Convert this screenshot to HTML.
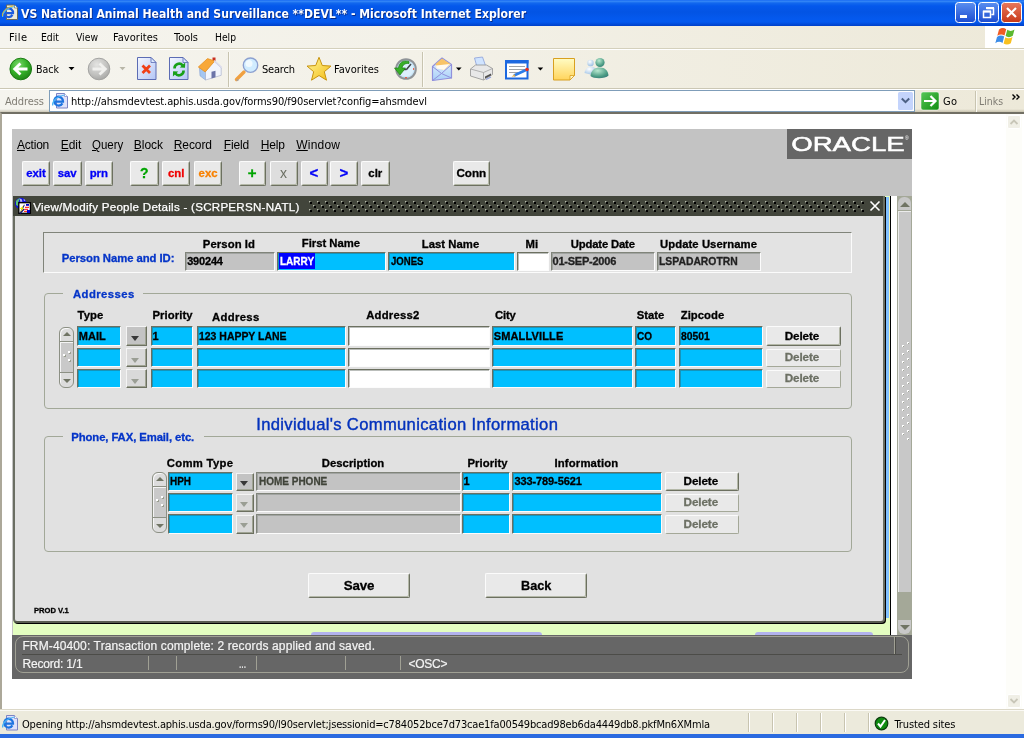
<!DOCTYPE html>
<html><head><meta charset="utf-8"><title>VS National Animal Health and Surveillance **DEVL** - Microsoft Internet Explorer</title>
<style>
*{box-sizing:border-box;margin:0;padding:0}
html,body{width:1024px;height:738px;overflow:hidden;background:#fff;font-family:"Liberation Sans",sans-serif}
.a{position:absolute}
.t{position:absolute;white-space:nowrap;line-height:1}
.fld{position:absolute;border:1px solid;border-color:#6c7060 #fcfcfc #fcfcfc #6c7060;box-shadow:inset 1px 1px 0 rgba(60,70,60,.35)}
.cy{background:#00bfff}
.gr{background:#c3c3c3;border-color:#80847a #fcfcfc #fcfcfc #80847a;box-shadow:inset 1px 1px 0 rgba(60,70,60,.25)}
.wh{background:#fff}
.btn{position:absolute;background:#e9e9e9;border:1px solid;border-color:#fbfbfb #6c7060 #6c7060 #fbfbfb;box-shadow:inset -1px -1px 0 #b4b8a8;border-radius:2px}
.grp{position:absolute;border:1px solid #a2a898;border-radius:4px}
.gap{position:absolute;background:#e1e1e1;height:3px}
.dd{position:absolute;background:#c3c3c3;border:1px solid;border-color:#f4f4f4 #6c7060 #6c7060 #f4f4f4;box-shadow:inset -1px -1px 0 #a0a494}
.dd:after{content:"";position:absolute;left:4px;top:9px;border:4.5px solid transparent;border-top:5px solid #383838;border-bottom:0}
.dd.sm:after{left:3px;top:7px}
.dd.off{background:#d9d9d9}
.dd.off:after{border-top-color:#9a9e94}
.scr{position:absolute;width:15px;background:#dcdcdc;border:1px solid #8c9084;border-radius:6px;box-shadow:inset 1px 1px 0 #f8f8f8}
</style></head><body><div id="root" style="position:absolute;left:0;top:0;width:1024px;height:738px;will-change:transform">
<div class="a" style="left:0;top:0;width:1024px;height:26px;background:linear-gradient(#0a5cf0 0,#3a8cf8 1px,#1268ee 3px,#0458ec 6px,#0354e4 12px,#0459ee 19px,#0459ee 22px,#0040c8 26px)"></div>
<div class="t" style="left:21.00px;top:7.30px;font-size:13px;font-family:'DejaVu Sans Condensed','Liberation Sans',sans-serif;font-weight:bold;color:#fff;letter-spacing:0.000px;text-shadow:1px 1px 0 #0a2a80;transform:scaleX(0.9295);transform-origin:0 0;">VS National Animal Health and Surveillance **DEVL** - Microsoft Internet Explorer</div>
<div class="a" style="left:0;top:26px;width:1024px;height:23px;background:linear-gradient(to right,#f5f4ee 0,#f3f1e8 40%,#ede9d9 100%);border-bottom:1px solid #d4d0bc"></div>
<div class="a" style="left:985px;top:26px;width:39px;height:22px;background:#fff"></div>
<div class="t" style="left:9.00px;top:32.30px;font-size:11px;font-family:'DejaVu Sans Condensed','Liberation Sans',sans-serif;color:#000;letter-spacing:0.505px;">File</div>
<div class="t" style="left:41.00px;top:32.30px;font-size:11px;font-family:'DejaVu Sans Condensed','Liberation Sans',sans-serif;color:#000;letter-spacing:0.000px;transform:scaleX(0.9393);transform-origin:0 0;">Edit</div>
<div class="t" style="left:76.00px;top:32.30px;font-size:11px;font-family:'DejaVu Sans Condensed','Liberation Sans',sans-serif;color:#000;letter-spacing:0.000px;transform:scaleX(0.9378);transform-origin:0 0;">View</div>
<div class="t" style="left:113.00px;top:32.30px;font-size:11px;font-family:'DejaVu Sans Condensed','Liberation Sans',sans-serif;color:#000;letter-spacing:0.050px;">Favorites</div>
<div class="t" style="left:174.00px;top:32.30px;font-size:11px;font-family:'DejaVu Sans Condensed','Liberation Sans',sans-serif;color:#000;letter-spacing:-0.046px;">Tools</div>
<div class="t" style="left:215.00px;top:32.30px;font-size:11px;font-family:'DejaVu Sans Condensed','Liberation Sans',sans-serif;color:#000;letter-spacing:0.000px;transform:scaleX(0.9305);transform-origin:0 0;">Help</div>
<div class="a" style="left:0;top:49px;width:1024px;height:40px;background:linear-gradient(to right,#f5f4ee 0,#f3f1e8 40%,#ede9d9 100%);border-top:1px solid #fff;border-bottom:1px solid #cbc7b4"></div>
<div class="t" style="left:36.00px;top:64.30px;font-size:11px;font-family:'DejaVu Sans Condensed','Liberation Sans',sans-serif;color:#000;letter-spacing:0.000px;transform:scaleX(0.9573);transform-origin:0 0;">Back</div>
<div class="t" style="left:262.00px;top:64.30px;font-size:11px;font-family:'DejaVu Sans Condensed','Liberation Sans',sans-serif;color:#000;letter-spacing:-0.195px;">Search</div>
<div class="t" style="left:334.00px;top:64.30px;font-size:11px;font-family:'DejaVu Sans Condensed','Liberation Sans',sans-serif;color:#000;letter-spacing:0.050px;">Favorites</div>
<div class="a" style="left:0;top:89px;width:1024px;height:24px;background:linear-gradient(to right,#f5f4ee 0,#f3f1e8 40%,#ede9d9 100%);border-top:1px solid #fff"></div>
<div class="a" style="left:0;top:109px;width:1024px;height:3px;background:linear-gradient(rgba(180,174,150,0),rgba(170,164,140,.55))"></div>
<div class="t" style="left:5.00px;top:96.30px;font-size:11px;font-family:'DejaVu Sans Condensed','Liberation Sans',sans-serif;color:#7f7c73;letter-spacing:-0.061px;">Address</div>
<div class="a" style="left:49px;top:90px;width:866px;height:22px;background:#fff;border:1px solid #7f9db9"></div>
<div class="t" style="left:71.00px;top:96.30px;font-size:11px;font-family:'DejaVu Sans Condensed','Liberation Sans',sans-serif;color:#000;letter-spacing:-0.089px;">http://ahsmdevtest.aphis.usda.gov/forms90/f90servlet?config=ahsmdevl</div>
<div class="t" style="left:943.00px;top:96.30px;font-size:11px;font-family:'DejaVu Sans Condensed','Liberation Sans',sans-serif;color:#000;letter-spacing:0.277px;">Go</div>
<div class="t" style="left:979.00px;top:96.30px;font-size:11px;font-family:'DejaVu Sans Condensed','Liberation Sans',sans-serif;color:#7f7c73;letter-spacing:0.000px;transform:scaleX(0.9441);transform-origin:0 0;">Links</div>
<svg class="a" style="left:0;top:0" width="1024" height="114" viewBox="0 0 1024 114">
<defs>
<radialGradient id="gB" cx="0.4" cy="0.3" r="0.8"><stop offset="0" stop-color="#7ad86a"/><stop offset="0.5" stop-color="#34b028"/><stop offset="1" stop-color="#1c7c14"/></radialGradient>
<radialGradient id="gF" cx="0.4" cy="0.3" r="0.8"><stop offset="0" stop-color="#e4e4e2"/><stop offset="0.6" stop-color="#c0c0be"/><stop offset="1" stop-color="#a0a09e"/></radialGradient>
<linearGradient id="gP" x1="0" y1="0" x2="1" y2="1"><stop offset="0" stop-color="#f4f7ff"/><stop offset="1" stop-color="#b4c6f6"/></linearGradient>
<linearGradient id="gN" x1="0" y1="0" x2="0" y2="1"><stop offset="0" stop-color="#fffcc4"/><stop offset="1" stop-color="#ffd45c"/></linearGradient>
<linearGradient id="gS" x1="0" y1="0" x2="1" y2="1"><stop offset="0" stop-color="#fff8a0"/><stop offset="1" stop-color="#f4bc10"/></linearGradient>
<linearGradient id="gM" x1="0" y1="0" x2="0" y2="1"><stop offset="0" stop-color="#e8f4ff"/><stop offset="1" stop-color="#a8d0f8"/></linearGradient>
<linearGradient id="gW" x1="0" y1="0" x2="0" y2="1"><stop offset="0" stop-color="#5a8ff0"/><stop offset="1" stop-color="#1c4cd0"/></linearGradient>
<linearGradient id="gX" x1="0" y1="0" x2="0" y2="1"><stop offset="0" stop-color="#e8785c"/><stop offset="1" stop-color="#c83818"/></linearGradient>
<linearGradient id="gG" x1="0" y1="0" x2="1" y2="1"><stop offset="0" stop-color="#58c858"/><stop offset="1" stop-color="#108c10"/></linearGradient>
<radialGradient id="gT" cx="0.4" cy="0.3" r="0.9"><stop offset="0" stop-color="#b8e8d0"/><stop offset="0.6" stop-color="#4c9c84"/><stop offset="1" stop-color="#2c6c74"/></radialGradient>
<radialGradient id="gU" cx="0.4" cy="0.3" r="0.9"><stop offset="0" stop-color="#ffffff"/><stop offset="0.7" stop-color="#a8c8e8"/><stop offset="1" stop-color="#6c94c8"/></radialGradient>
</defs>
<!-- title icon -->
<path d="M6.5 5.0h8l3 3v11.500h-11z" fill="#ecebdc" stroke="#6c6a58" stroke-width="1"/><path d="M14.5 5.0v3h3" fill="#fff" stroke="#6c6a58" stroke-width="0.700"/><path d="M12.42 14.89A4.4 4.4 0 1 1 13.00 13.1 H4.60" fill="none" stroke="#1c5ce0" stroke-width="2.300"/><path d="M2.6 17.0C2 12.5 7 7.5 14.5 6.5" fill="none" stroke="#4cb4f4" stroke-width="1.200"/>
<path d="M2.500 16C1.800 12 6 7 13 6.200" fill="none" stroke="#e8c020" stroke-width="0.900"/>
<!-- window buttons -->
<rect x="955.500" y="2.500" width="20" height="20" rx="3" fill="url(#gW)" stroke="#fff"/>
<rect x="960" y="15" width="7" height="3" fill="#fff"/>
<rect x="978.500" y="2.500" width="20" height="20" rx="3" fill="url(#gW)" stroke="#fff"/>
<path d="M986.500 8.500h7v6h-2M983.500 11.500h7v6h-7z" fill="none" stroke="#fff" stroke-width="1.500"/>
<path d="M986 8h8M983 11.500h8" stroke="#fff" stroke-width="2"/>
<rect x="1001.500" y="2.500" width="20" height="20" rx="3" fill="url(#gX)" stroke="#fff"/>
<path d="M1007 8l9 9M1016 8l-9 9" stroke="#fff" stroke-width="2.200"/>
<!-- windows flag -->
<g transform="translate(1,-0.5)">
<path d="M998 30c2.500-1.800 5-1.800 7.200-.3l-1.700 6.300c-2.200-1.500-4.700-1.500-7.200.3z" fill="#f05c24"/>
<path d="M1006.300 30.300c2.200 1.500 4.700 1.500 7.200-.3l-1.700 6.300c-2.500 1.800-5 1.800-7.200.3z" fill="#5cb830"/>
<path d="M996 37.400c2.500-1.800 5-1.800 7.200-.3l-1.700 6.300c-2.200-1.500-4.700-1.500-7.200.3z" fill="#3c8ce8"/>
<path d="M1004.300 37.700c2.200 1.500 4.700 1.500 7.200-.3l-1.700 6.300c-2.500 1.800-5 1.800-7.200.3z" fill="#f8c020"/>
</g>
<!-- back -->
<circle cx="20.750" cy="69" r="10.800" fill="url(#gB)" stroke="#1c7c14" stroke-width="1"/>
<path d="M27.500 69h-12M20.500 63.500l-5.800 5.500l5.800 5.500" fill="none" stroke="#fff" stroke-width="2.800" stroke-linejoin="miter"/>
<path d="M68.500 67h6l-3 3.200z" fill="#000"/>
<circle cx="99" cy="69" r="10.800" fill="url(#gF)" stroke="#a4a4a2" stroke-width="1"/>
<path d="M92.500 69h12M99.500 63.500l5.800 5.500l-5.800 5.500" fill="none" stroke="#f0f0ee" stroke-width="2.800"/>
<path d="M119.500 67h6l-3 3.200z" fill="#b8b6a8"/>
<!-- stop -->
<path d="M137.500 57.500h13.500l5 5v17h-18.500z" fill="url(#gP)" stroke="#5c6cb4"/>
<path d="M151 57.500v5h5z" fill="#dce8ff" stroke="#5c6cb4" stroke-width="0.800"/>
<path d="M142.500 65.500l7.500 7.500M150 65.500l-7.500 7.500" stroke="#f04018" stroke-width="2.800"/>
<!-- refresh -->
<path d="M169.500 57.500h13.500l5 5v17h-18.500z" fill="url(#gP)" stroke="#5c6cb4"/>
<path d="M183 57.500v5h5z" fill="#dce8ff" stroke="#5c6cb4" stroke-width="0.800"/>
<path d="M174.500 68.500a4.600 4.600 0 0 1 8.200-3" fill="none" stroke="#18a018" stroke-width="2.600"/>
<path d="M179.800 67.500l5.200.3l.2-5.300z" fill="#18a018"/>
<path d="M183.600 70.500a4.600 4.600 0 0 1 -8.200 3" fill="none" stroke="#18a018" stroke-width="2.600"/>
<path d="M178.300 71.500l-5.200-.3l-.2 5.300z" fill="#18a018"/>
<!-- home -->
<path d="M212.500 57.500h3v5h-3z" fill="#c83020"/>
<path d="M199.500 67.500l6 4v8.500l-5.500-4.200z" fill="#a4c6f2" stroke="#86a0d0" stroke-width=".6"/>
<path d="M205.500 71.500l8.500-10.300l7.200 6.800v7.300l-15.700 4.700z" fill="#f2f5fc" stroke="#a0a8c8" stroke-width=".6"/>
<path d="M211.500 71.800l4-1.100v6.600l-4 1.300z" fill="#6c74a8"/>
<path d="M198.300 67l9.200-8.400l7.300 2.400l-9.600 11z" fill="#f8a838" stroke="#e48c1c" stroke-width=".7"/>
<path d="M214.200 60.600l7.600 7" stroke="#dcdcec" stroke-width="1.500"/>
<!-- separators -->
<path d="M228.500 52v35M422.500 52v35" stroke="#c8c4b0"/>
<path d="M229.500 52v35M423.500 52v35" stroke="#fbfaf4"/>
<!-- search -->
<path d="M244 72l-7.500 7.500" stroke="#f0a040" stroke-width="3.400" stroke-linecap="round"/>
<path d="M238.500 79.800l-2 .6" stroke="#a0a0a8" stroke-width="1.500"/>
<circle cx="250.500" cy="65.200" r="7.200" fill="#d0ecff" stroke="#8ca0d0" stroke-width="1.400"/>
<circle cx="249" cy="63.500" r="3.500" fill="#f0faff"/>
<!-- star -->
<path d="M319 57.300l3.300 8.200l8.700.6l-6.700 5.600l2.200 8.500l-7.500-4.700l-7.500 4.700l2.200-8.500l-6.700-5.600l8.700-.6z" fill="url(#gS)" stroke="#c89410" stroke-width="1" stroke-linejoin="round"/>
<!-- history -->
<circle cx="406" cy="69" r="9.800" fill="#c8e6f8" stroke="#909498" stroke-width="2"/>
<circle cx="406" cy="69" r="7.500" fill="#dcf0fc"/>
<path d="M406.500 69.500l4.500-5.500M406.500 69.500h-3" stroke="#404448" stroke-width="1.500"/>
<path d="M413 69h1.200M406 77v1.200" stroke="#f04020" stroke-width="1.500"/>
<path d="M409 61.500c-6-2-10 1.500-10.500 6.500h-4l5.500 7l5.500-7h-3.500c.5-3 3-5 7-4.500z" fill="#38b028" stroke="#1c7c14" stroke-width="0.700"/>
<!-- mail -->
<path d="M432.500 66.500l9.500-8.500l9.500 6.500v13.500l-19 2.500z" fill="url(#gM)" stroke="#9090dc" stroke-width="1.200" stroke-linejoin="round"/>
<path d="M435.500 64l6.500-5.500l8.500 5.500l-6.500 6l-7-2z" fill="#f8c468"/>
<path d="M436 65.500l14-1.500l-6 6l-7.500-1.500z" fill="#fffaf0"/>
<path d="M432.500 66.500l9 7l10-9M432.500 80.500l9-7l10 4.500" fill="none" stroke="#9090dc" stroke-width="1"/>
<path d="M456 67.500h5.600l-2.800 3z" fill="#000"/>
<!-- print -->
<path d="M474.500 58l8-1l3.500 10h-9z" fill="#d0e4ff" stroke="#8ca0d8" stroke-width="0.800"/>
<path d="M470.500 69l5-4h11l6 3.500v6l-9 5.500l-13-4z" fill="#e8e8e8" stroke="#909090" stroke-width="0.800"/>
<path d="M470.500 69l13 3.500l9-4" fill="none" stroke="#a0a0a0" stroke-width="0.800"/>
<path d="M483.500 72.500v7.500" stroke="#a0a0a0" stroke-width="0.800"/>
<path d="M485 76.500l6-3v2l-6 3z" fill="#505050"/>
<path d="M486 79.500l5-2.500" stroke="#90a0e0" stroke-width="1.200"/>
<!-- edit -->
<rect x="506" y="61" width="21.500" height="17.500" fill="#fff" stroke="#1c68e0" stroke-width="2"/>
<rect x="505" y="60" width="23.500" height="3.500" fill="#1c68e0"/>
<path d="M509 66.500h16M509 69.500h16M509 72.500h9" stroke="#a0a4a8" stroke-width="1"/>
<path d="M514 75.500l12-5.500" stroke="#2c7ce8" stroke-width="2.600"/>
<path d="M511.500 76.800l3-2.500l1 2z" fill="#e8b040"/>
<circle cx="527" cy="69.500" r="1.800" fill="#e83020"/>
<path d="M537.600 67.500h5.600l-2.800 3z" fill="#000"/>
<!-- note -->
<path d="M553.500 58.500h21v17l-4.500 4.500h-16.500z" fill="url(#gN)" stroke="#d8a020" stroke-width="1"/>
<path d="M574.500 75.500h-4.500v4.500z" fill="#fff4c0" stroke="#d8a020" stroke-width="0.800"/>
<!-- messenger -->
<circle cx="590.500" cy="63" r="3.200" fill="url(#gU)"/>
<path d="M584.500 73c1-5 4-6.500 6.500-6.500s4.500 1.500 5.500 4l-4 4.500z" fill="url(#gU)"/>
<circle cx="600" cy="62.500" r="4.600" fill="url(#gT)"/>
<path d="M590.500 76c.5-6 4.500-8.500 9.500-8.500s8 3 8.500 8c-3 3.500-15 3.500-18 .5z" fill="url(#gT)"/>
<!-- address bar icon -->
<path d="M56.5 93.5h8l3 3v11.500h-11z" fill="#dfe2fa" stroke="#7c84c4" stroke-width="1"/><path d="M64.5 93.5v3h3" fill="#fff" stroke="#7c84c4" stroke-width="0.700"/><path d="M62.42 103.39A4.4 4.4 0 1 1 63.00 101.6 H54.60" fill="none" stroke="#1e74e0" stroke-width="2.300"/><path d="M52.6 105.5C52 101 57 96 64.5 95" fill="none" stroke="#4cb4f4" stroke-width="1.200"/>
<!-- address dropdown -->
<rect x="898" y="92" width="15" height="18" rx="1.500" fill="#c4d4fc"/>
<path d="M901.800 98.500l3.700 3.700l3.700-3.700" fill="none" stroke="#4c6084" stroke-width="2"/>
<!-- go -->
<rect x="921" y="92" width="18" height="18" rx="2" fill="url(#gG)" stroke="#fff" stroke-width="0.500"/>
<path d="M924 101h11M930.500 96l5 5l-5 5" fill="none" stroke="#fff" stroke-width="2.200"/>
<path d="M975.500 91v21" stroke="#c8c4b0"/><path d="M976.500 91v21" stroke="#fbfaf4"/>
<path d="M1012.500 94.500l2.500 2.500l-2.500 2.500M1016.500 94.500l2.500 2.500l-2.500 2.500" fill="none" stroke="#000" stroke-width="1.400"/>
</svg>

<div class="a" style="left:0;top:112px;width:1024px;height:597px;background:#fff;border-left:2px solid #aca899;border-top:2px solid #716f64"></div>
<div class="a" style="left:1006px;top:114px;width:16px;height:596px;background:#fdfdf9"></div>
<div class="a" style="left:1007px;top:115px;width:14px;height:14px;background:#f0efe6;border:1px solid #fff;border-radius:2px"></div>
<div class="a" style="left:1007px;top:694px;width:14px;height:14px;background:#f0efe6;border:1px solid #fff;border-radius:2px"></div>
<svg class="a" style="left:1007px;top:115px" width="14" height="594"><path d="M3.500 9l3.500-3.500l3.500 3.500M3.500 584l3.500 3.500l3.500-3.500" fill="none" stroke="#c8c6b8" stroke-width="1.800"/></svg>
<div class="a" style="left:12px;top:129px;width:900px;height:550px;background:#c3c3c3"></div>
<div class="t" style="left:17.00px;top:139.30px;font-size:12px;color:#000;letter-spacing:-0.220px;"><u>A</u>ction</div>
<div class="t" style="left:60.75px;top:139.30px;font-size:12px;color:#000;letter-spacing:-0.059px;"><u>E</u>dit</div>
<div class="t" style="left:91.75px;top:139.30px;font-size:12px;color:#000;letter-spacing:0.000px;transform:scaleX(0.9563);transform-origin:0 0;"><u>Q</u>uery</div>
<div class="t" style="left:133.75px;top:139.30px;font-size:12px;color:#000;letter-spacing:-0.023px;"><u>B</u>lock</div>
<div class="t" style="left:173.75px;top:139.30px;font-size:12px;color:#000;letter-spacing:-0.087px;"><u>R</u>ecord</div>
<div class="t" style="left:223.75px;top:139.30px;font-size:12px;color:#000;letter-spacing:-0.127px;"><u>F</u>ield</div>
<div class="t" style="left:260.75px;top:139.30px;font-size:12px;color:#000;letter-spacing:-0.143px;"><u>H</u>elp</div>
<div class="t" style="left:296.25px;top:139.30px;font-size:12px;color:#000;letter-spacing:0.214px;"><u>W</u>indow</div>
<div class="btn" style="left:22px;top:161px;width:28px;height:25px;background:#e9e9e9;border-radius:2px"></div>
<div class="t" style="left:26.13px;top:167.60px;font-size:11.4px;font-weight:bold;-webkit-text-stroke:0.3px;color:#0000f8;letter-spacing:0.000px;">exit</div>
<div class="btn" style="left:53px;top:161px;width:29px;height:25px;background:#e9e9e9;border-radius:2px"></div>
<div class="t" style="left:57.69px;top:167.60px;font-size:11.4px;font-weight:bold;-webkit-text-stroke:0.3px;color:#0000f8;letter-spacing:0.000px;">sav</div>
<div class="btn" style="left:85px;top:161px;width:28px;height:25px;background:#e9e9e9;border-radius:2px"></div>
<div class="t" style="left:89.64px;top:167.60px;font-size:11.4px;font-weight:bold;-webkit-text-stroke:0.3px;color:#0000f8;letter-spacing:0.000px;">prn</div>
<div class="btn" style="left:130px;top:161px;width:29px;height:25px;background:#e9e9e9;border-radius:2px"></div>
<div class="t" style="left:140.05px;top:166.30px;font-size:14px;font-weight:bold;-webkit-text-stroke:0.3px;color:#00a400;letter-spacing:0.000px;">?</div>
<div class="btn" style="left:162px;top:161px;width:28px;height:25px;background:#e9e9e9;border-radius:2px"></div>
<div class="t" style="left:167.96px;top:167.60px;font-size:11.4px;font-weight:bold;-webkit-text-stroke:0.3px;color:#f00000;letter-spacing:0.000px;">cnl</div>
<div class="btn" style="left:194px;top:161px;width:28px;height:25px;background:#e9e9e9;border-radius:2px"></div>
<div class="t" style="left:198.56px;top:167.60px;font-size:11.4px;font-weight:bold;-webkit-text-stroke:0.3px;color:#f88000;letter-spacing:0.000px;">exc</div>
<div class="btn" style="left:239px;top:161px;width:27px;height:25px;background:#e9e9e9;border-radius:2px"></div>
<div class="t" style="left:247.82px;top:165.30px;font-size:15px;font-weight:bold;-webkit-text-stroke:0.3px;color:#00a400;letter-spacing:0.000px;">+</div>
<div class="btn" style="left:270px;top:161px;width:28px;height:25px;background:#dedede;border-radius:2px"></div>
<div class="t" style="left:280.00px;top:166.30px;font-size:14px;color:#6c7064;letter-spacing:0.000px;">x</div>
<div class="btn" style="left:301px;top:161px;width:27px;height:25px;background:#e9e9e9;border-radius:2px"></div>
<div class="t" style="left:309.45px;top:165.30px;font-size:15px;font-weight:bold;-webkit-text-stroke:0.3px;color:#0000f8;letter-spacing:0.000px;">&lt;</div>
<div class="btn" style="left:330px;top:161px;width:28px;height:25px;background:#e9e9e9;border-radius:2px"></div>
<div class="t" style="left:339.57px;top:165.30px;font-size:15px;font-weight:bold;-webkit-text-stroke:0.3px;color:#0000f8;letter-spacing:0.000px;">&gt;</div>
<div class="btn" style="left:361px;top:161px;width:29px;height:25px;background:#e9e9e9;border-radius:2px"></div>
<div class="t" style="left:368.35px;top:167.60px;font-size:11.4px;font-weight:bold;-webkit-text-stroke:0.3px;color:#000;letter-spacing:0.000px;">clr</div>
<div class="btn" style="left:453px;top:161px;width:37px;height:25px;background:#e9e9e9;border-radius:2px"></div>
<div class="t" style="left:456.38px;top:166.95px;font-size:11.7px;font-weight:bold;-webkit-text-stroke:0.3px;color:#000;letter-spacing:0.000px;">Conn</div>
<div class="a" style="left:787px;top:129px;width:125px;height:30px;background:#666"></div>
<svg class="a" style="left:787px;top:129px" width="125" height="30"><text x="4.2" y="22" font-family="Liberation Sans, sans-serif" font-size="20.8" fill="#fff" stroke="#fff" stroke-width="0.5" textLength="113.5" lengthAdjust="spacingAndGlyphs">ORACLE</text><text x="118" y="10.5" font-family="Liberation Sans, sans-serif" font-size="5" fill="#fff">®</text></svg>
<div class="a" style="left:13px;top:196px;width:884px;height:439px;background:#fff"></div>
<div class="a" style="left:13px;top:196px;width:878px;height:439px;background:#e3fec0;border-right:1px solid #000"></div>
<div class="a" style="left:311px;top:632px;width:231px;height:3px;background:#b2b2ee;border-radius:3px 3px 0 0"></div>
<div class="a" style="left:755px;top:632px;width:118px;height:3px;background:#b2b2ee;border-radius:3px 3px 0 0"></div>
<div class="a" style="left:897px;top:196px;width:15px;height:439px;background:#a4a898"></div>
<div class="a" style="left:898px;top:197px;width:13px;height:13px;background:#c8c8c8;border-radius:6px 6px 0 0"></div>
<div class="a" style="left:898px;top:211px;width:13px;height:381px;background:#c8c8c8;border-top:1px solid #ececec;border-left:1px solid #ececec"></div>
<div class="a" style="left:898px;top:620px;width:13px;height:14px;background:#c8c8c8;border-radius:0 0 6px 6px"></div>
<div class="a" style="left:900px;top:202px;border:5px solid transparent;border-bottom:5px solid #707464;border-top:0"></div>
<div class="a" style="left:900px;top:625px;border:5px solid transparent;border-top:5px solid #707464;border-bottom:0"></div>
<svg class="a" style="left:898px;top:342px" width="13" height="100"><rect x="4" y="3" width="2" height="2" fill="#fff"/><rect x="5" y="4" width="1" height="1" fill="#a0a498"/><rect x="4" y="11" width="2" height="2" fill="#fff"/><rect x="5" y="12" width="1" height="1" fill="#a0a498"/><rect x="4" y="19" width="2" height="2" fill="#fff"/><rect x="5" y="20" width="1" height="1" fill="#a0a498"/><rect x="4" y="27" width="2" height="2" fill="#fff"/><rect x="5" y="28" width="1" height="1" fill="#a0a498"/><rect x="4" y="35" width="2" height="2" fill="#fff"/><rect x="5" y="36" width="1" height="1" fill="#a0a498"/><rect x="4" y="43" width="2" height="2" fill="#fff"/><rect x="5" y="44" width="1" height="1" fill="#a0a498"/><rect x="4" y="51" width="2" height="2" fill="#fff"/><rect x="5" y="52" width="1" height="1" fill="#a0a498"/><rect x="4" y="59" width="2" height="2" fill="#fff"/><rect x="5" y="60" width="1" height="1" fill="#a0a498"/><rect x="4" y="67" width="2" height="2" fill="#fff"/><rect x="5" y="68" width="1" height="1" fill="#a0a498"/><rect x="4" y="75" width="2" height="2" fill="#fff"/><rect x="5" y="76" width="1" height="1" fill="#a0a498"/><rect x="4" y="83" width="2" height="2" fill="#fff"/><rect x="5" y="84" width="1" height="1" fill="#a0a498"/><rect x="4" y="91" width="2" height="2" fill="#fff"/><rect x="5" y="92" width="1" height="1" fill="#a0a498"/><rect x="9" y="0" width="2" height="2" fill="#fff"/><rect x="10" y="1" width="1" height="1" fill="#a0a498"/><rect x="9" y="8" width="2" height="2" fill="#fff"/><rect x="10" y="9" width="1" height="1" fill="#a0a498"/><rect x="9" y="16" width="2" height="2" fill="#fff"/><rect x="10" y="17" width="1" height="1" fill="#a0a498"/><rect x="9" y="24" width="2" height="2" fill="#fff"/><rect x="10" y="25" width="1" height="1" fill="#a0a498"/><rect x="9" y="32" width="2" height="2" fill="#fff"/><rect x="10" y="33" width="1" height="1" fill="#a0a498"/><rect x="9" y="40" width="2" height="2" fill="#fff"/><rect x="10" y="41" width="1" height="1" fill="#a0a498"/><rect x="9" y="48" width="2" height="2" fill="#fff"/><rect x="10" y="49" width="1" height="1" fill="#a0a498"/><rect x="9" y="56" width="2" height="2" fill="#fff"/><rect x="10" y="57" width="1" height="1" fill="#a0a498"/><rect x="9" y="64" width="2" height="2" fill="#fff"/><rect x="10" y="65" width="1" height="1" fill="#a0a498"/><rect x="9" y="72" width="2" height="2" fill="#fff"/><rect x="10" y="73" width="1" height="1" fill="#a0a498"/><rect x="9" y="80" width="2" height="2" fill="#fff"/><rect x="10" y="81" width="1" height="1" fill="#a0a498"/><rect x="9" y="88" width="2" height="2" fill="#fff"/><rect x="10" y="89" width="1" height="1" fill="#a0a498"/><rect x="9" y="96" width="2" height="2" fill="#fff"/><rect x="10" y="97" width="1" height="1" fill="#a0a498"/></svg>
<div class="a" style="left:12px;top:635px;width:900px;height:44px;background:#666"></div>
<div class="a" style="left:13px;top:196px;width:872px;height:427px;background:#e1e1e1;border:2px solid #6a6e62;border-bottom-color:#585c50;border-radius:0 0 4px 4px;box-shadow:1px 1px 0 #000"></div>
<div class="a" style="left:886px;top:197px;width:4px;height:421px;background:#80c0ff;border-right:1px solid #f4f4b4"></div>
<div class="a" style="left:13px;top:196px;width:870px;height:20px;background:#42453b"></div>
<svg class="a" style="left:309px;top:201px" width="555" height="11"><defs><pattern id="pd" width="8" height="8" patternUnits="userSpaceOnUse"><rect x="0" y="0" width="1" height="1" fill="#b4b8a8"/><rect x="1" y="1" width="2" height="2" fill="#000"/><rect x="1" y="0" width="1" height="1" fill="#70746a"/><rect x="0" y="1" width="1" height="1" fill="#70746a"/><rect x="4" y="4" width="1" height="1" fill="#b4b8a8"/><rect x="5" y="5" width="2" height="2" fill="#000"/><rect x="5" y="4" width="1" height="1" fill="#70746a"/><rect x="4" y="5" width="1" height="1" fill="#70746a"/></pattern></defs><rect width="555" height="11" fill="url(#pd)"/></svg>
<svg class="a" style="left:14px;top:197px" width="18" height="18" viewBox="14 197 18 18">
<circle cx="20.800" cy="203.500" r="5.700" fill="#1010e0"/>
<path d="M16 201c1-1.500 2.500-2.500 4-2.800l-1.500 3.500l-.8 4.500l-1.700-1.500z" fill="#58c078"/>
<path d="M19.500 198.500l2 .5l1 2.500l-2 .5zM23.500 198.800l2 1.500l-1.500 1z" fill="#b8b8f0"/>
<rect x="18.800" y="202.700" width="11.600" height="10.600" fill="#fff" stroke="#000" stroke-width="1.300"/>
<rect x="26" y="204" width="3" height="1.800" fill="#0000d0"/>
<path d="M25 207.300h4M24.500 209.300h3.500M24 211.300h3" stroke="#f00" stroke-width="1"/>
<rect x="27" y="210" width="3" height="3" fill="#0000d0"/>
<path d="M19.500 213l4.500-8.500l.8.500l-1.800 3.800l1.800.5l-4.300 4.700z" fill="#101080"/>
<path d="M23.800 205l-4.300 4h2.300l-2 3.800l4.300-4.600h-2.100z" fill="#ffff00"/>
</svg>
<div class="t" style="left:33.20px;top:200.50px;font-size:11.6px;color:#fff;letter-spacing:0.251px;-webkit-text-stroke:0.25px #fff;">View/Modify People Details - (SCRPERSN-NATL)</div>
<svg class="a" style="left:869px;top:200px" width="12" height="12"><path d="M1.5 1.5L10.5 10.5M10.5 1.5L1.5 10.5" stroke="#fff" stroke-width="1.6"/></svg>
<div class="a" style="left:43px;top:232px;width:809px;height:41px;background:#e3e3e3;border:1px solid;border-color:#80847a #fbfbfb #fbfbfb #80847a"></div>
<div class="t" style="left:61.75px;top:252.65px;font-size:11.3px;font-weight:bold;-webkit-text-stroke:0.3px;color:#0535c8;letter-spacing:-0.050px;">Person Name and ID:</div>
<div class="t" style="left:202.80px;top:238.65px;font-size:11.3px;font-weight:bold;-webkit-text-stroke:0.3px;color:#000;letter-spacing:0.089px;">Person Id</div>
<div class="t" style="left:301.75px;top:237.65px;font-size:11.3px;font-weight:bold;-webkit-text-stroke:0.3px;color:#000;letter-spacing:-0.017px;">First Name</div>
<div class="t" style="left:421.75px;top:238.65px;font-size:11.3px;font-weight:bold;-webkit-text-stroke:0.3px;color:#000;letter-spacing:0.044px;">Last Name</div>
<div class="t" style="left:525.50px;top:238.65px;font-size:11.3px;font-weight:bold;-webkit-text-stroke:0.3px;color:#000;letter-spacing:0.198px;">Mi</div>
<div class="t" style="left:570.75px;top:238.65px;font-size:11.3px;font-weight:bold;-webkit-text-stroke:0.3px;color:#000;letter-spacing:-0.168px;">Update Date</div>
<div class="t" style="left:660.00px;top:238.65px;font-size:11.3px;font-weight:bold;-webkit-text-stroke:0.3px;color:#000;letter-spacing:0.066px;">Update Username</div>
<div class="fld gr" style="left:185px;top:252px;width:90px;height:19px"></div>
<div class="t" style="left:187.20px;top:255.80px;font-size:11px;font-weight:bold;-webkit-text-stroke:0.3px;color:#000;letter-spacing:-0.181px;">390244</div>
<div class="fld cy" style="left:277px;top:252px;width:109px;height:19px"></div>
<div class="a" style="left:279px;top:253px;width:36px;height:16px;background:#0000ff"></div>
<div class="t" style="left:279.70px;top:255.80px;font-size:11px;font-weight:bold;-webkit-text-stroke:0.3px;color:#fff;letter-spacing:0.000px;transform:scaleX(0.9098);transform-origin:0 0;">LARRY</div>
<div class="fld cy" style="left:388px;top:252px;width:127px;height:19px"></div>
<div class="t" style="left:390.50px;top:255.80px;font-size:11px;font-weight:bold;-webkit-text-stroke:0.3px;color:#000;letter-spacing:0.000px;transform:scaleX(0.8715);transform-origin:0 0;">JONES</div>
<div class="fld wh" style="left:517px;top:252px;width:32px;height:19px"></div>
<div class="fld gr" style="left:551px;top:252px;width:104px;height:19px"></div>
<div class="t" style="left:552.50px;top:255.80px;font-size:11px;font-weight:bold;-webkit-text-stroke:0.3px;color:#222;letter-spacing:-0.229px;">01-SEP-2006</div>
<div class="fld gr" style="left:657px;top:252px;width:104px;height:19px"></div>
<div class="t" style="left:659.25px;top:255.80px;font-size:11px;font-weight:bold;-webkit-text-stroke:0.3px;color:#222;letter-spacing:0.000px;transform:scaleX(0.9429);transform-origin:0 0;">LSPADAROTRN</div>
<div class="grp" style="left:44px;top:293px;width:808px;height:116px"></div>
<div class="gap" style="left:63px;top:292px;width:80px"></div>
<div class="t" style="left:73.00px;top:288.65px;font-size:11.3px;font-weight:bold;-webkit-text-stroke:0.3px;color:#0535c8;letter-spacing:0.433px;">Addresses</div>
<div class="t" style="left:77.50px;top:309.65px;font-size:11.3px;font-weight:bold;-webkit-text-stroke:0.3px;color:#000;letter-spacing:0.071px;">Type</div>
<div class="t" style="left:152.50px;top:309.65px;font-size:11.3px;font-weight:bold;-webkit-text-stroke:0.3px;color:#000;letter-spacing:0.063px;">Priority</div>
<div class="t" style="left:212.00px;top:311.65px;font-size:11.3px;font-weight:bold;-webkit-text-stroke:0.3px;color:#000;letter-spacing:0.339px;">Address</div>
<div class="t" style="left:366.25px;top:309.65px;font-size:11.3px;font-weight:bold;-webkit-text-stroke:0.3px;color:#000;letter-spacing:0.214px;">Address2</div>
<div class="t" style="left:495.00px;top:309.65px;font-size:11.3px;font-weight:bold;-webkit-text-stroke:0.3px;color:#000;letter-spacing:-0.199px;">City</div>
<div class="t" style="left:636.75px;top:309.65px;font-size:11.3px;font-weight:bold;-webkit-text-stroke:0.3px;color:#000;letter-spacing:-0.033px;">State</div>
<div class="t" style="left:680.75px;top:309.65px;font-size:11.3px;font-weight:bold;-webkit-text-stroke:0.3px;color:#000;letter-spacing:0.030px;">Zipcode</div>
<div class="fld cy" style="left:77px;top:326px;width:44px;height:20px"></div>
<div class="dd" style="left:126px;top:326px;width:21px;height:20px"></div>
<div class="fld cy" style="left:151px;top:326px;width:42px;height:20px"></div>
<div class="fld cy" style="left:197px;top:326px;width:149px;height:20px"></div>
<div class="fld wh" style="left:348px;top:326px;width:142px;height:20px"></div>
<div class="fld cy" style="left:492px;top:326px;width:141px;height:20px"></div>
<div class="fld cy" style="left:635px;top:326px;width:41px;height:20px"></div>
<div class="fld cy" style="left:679px;top:326px;width:84px;height:20px"></div>
<div class="btn" style="left:766px;top:326px;width:75px;height:20px;border-radius:2px;"></div>
<div class="t" style="left:784.70px;top:329.95px;font-size:11.7px;font-weight:bold;-webkit-text-stroke:0.3px;color:#000;letter-spacing:-0.123px;">Delete</div>
<div class="fld cy" style="left:77px;top:348px;width:44px;height:19px"></div>
<div class="dd off" style="left:126px;top:348px;width:21px;height:19px"></div>
<div class="fld cy" style="left:151px;top:348px;width:42px;height:19px"></div>
<div class="fld cy" style="left:197px;top:348px;width:149px;height:19px"></div>
<div class="fld wh" style="left:348px;top:348px;width:142px;height:19px"></div>
<div class="fld cy" style="left:492px;top:348px;width:141px;height:19px"></div>
<div class="fld cy" style="left:635px;top:348px;width:41px;height:19px"></div>
<div class="fld cy" style="left:679px;top:348px;width:84px;height:19px"></div>
<div class="btn" style="left:766px;top:349px;width:75px;height:18px;border-radius:2px;border-color:#fbfbfb #a4a898 #a4a898 #fbfbfb;box-shadow:none"></div>
<div class="t" style="left:784.70px;top:350.95px;font-size:11.7px;font-weight:bold;-webkit-text-stroke:0.3px;color:#6c7064;letter-spacing:-0.123px;">Delete</div>
<div class="fld cy" style="left:77px;top:369px;width:44px;height:19px"></div>
<div class="dd off" style="left:126px;top:369px;width:21px;height:19px"></div>
<div class="fld cy" style="left:151px;top:369px;width:42px;height:19px"></div>
<div class="fld cy" style="left:197px;top:369px;width:149px;height:19px"></div>
<div class="fld wh" style="left:348px;top:369px;width:142px;height:19px"></div>
<div class="fld cy" style="left:492px;top:369px;width:141px;height:19px"></div>
<div class="fld cy" style="left:635px;top:369px;width:41px;height:19px"></div>
<div class="fld cy" style="left:679px;top:369px;width:84px;height:19px"></div>
<div class="btn" style="left:766px;top:370px;width:75px;height:18px;border-radius:2px;border-color:#fbfbfb #a4a898 #a4a898 #fbfbfb;box-shadow:none"></div>
<div class="t" style="left:784.70px;top:371.95px;font-size:11.7px;font-weight:bold;-webkit-text-stroke:0.3px;color:#6c7064;letter-spacing:-0.123px;">Delete</div>
<div class="t" style="left:78.75px;top:330.80px;font-size:11px;font-weight:bold;-webkit-text-stroke:0.3px;color:#000;letter-spacing:0.040px;">MAIL</div>
<div class="t" style="left:152.50px;top:330.80px;font-size:11px;font-weight:bold;-webkit-text-stroke:0.3px;color:#000;letter-spacing:0.000px;">1</div>
<div class="t" style="left:198.75px;top:330.80px;font-size:11px;font-weight:bold;-webkit-text-stroke:0.3px;color:#000;letter-spacing:0.000px;transform:scaleX(0.9500);transform-origin:0 0;">123 HAPPY LANE</div>
<div class="t" style="left:493.75px;top:330.80px;font-size:11px;font-weight:bold;-webkit-text-stroke:0.3px;color:#000;letter-spacing:0.141px;">SMALLVILLE</div>
<div class="t" style="left:637.00px;top:330.80px;font-size:11px;font-weight:bold;-webkit-text-stroke:0.3px;color:#000;letter-spacing:0.000px;transform:scaleX(0.9091);transform-origin:0 0;">CO</div>
<div class="t" style="left:680.75px;top:330.80px;font-size:11px;font-weight:bold;-webkit-text-stroke:0.3px;color:#000;letter-spacing:0.000px;transform:scaleX(0.9400);transform-origin:0 0;">80501</div>
<div class="scr" style="left:59px;top:327px;height:61px"></div>
<div class="a" style="left:60px;top:341px;width:13px;height:32px;background:#c9c9c9;border-top:1px solid #8c9084;border-bottom:1px solid #8c9084;box-shadow:inset 1px 1px 0 #f4f4f4"></div>
<div class="a" style="left:62.5px;top:332px;border:4px solid transparent;border-bottom:4.5px solid #707464;border-top:0"></div>
<div class="a" style="left:62.5px;top:378.5px;border:4px solid transparent;border-top:4.5px solid #707464;border-bottom:0"></div>
<div class="a" style="left:63px;top:354px;width:2px;height:2px;background:#fff;box-shadow:1px 1px 0 #9a9e90"></div>
<div class="a" style="left:68px;top:351px;width:2px;height:2px;background:#fff;box-shadow:1px 1px 0 #9a9e90"></div>
<div class="a" style="left:68px;top:359px;width:2px;height:2px;background:#fff;box-shadow:1px 1px 0 #9a9e90"></div>
<div class="t" style="left:256.25px;top:416.50px;font-size:16.6px;color:#0432bc;letter-spacing:0.339px;-webkit-text-stroke:0.4px #0432bc;">Individual&#x27;s Communication Information</div>
<div class="grp" style="left:44px;top:436px;width:808px;height:116px"></div>
<div class="gap" style="left:63px;top:435px;width:141px"></div>
<div class="t" style="left:71.25px;top:431.65px;font-size:11.3px;font-weight:bold;-webkit-text-stroke:0.3px;color:#0535c8;letter-spacing:-0.089px;">Phone, FAX, Email, etc.</div>
<div class="t" style="left:166.75px;top:457.65px;font-size:11.3px;font-weight:bold;-webkit-text-stroke:0.3px;color:#000;letter-spacing:0.302px;">Comm Type</div>
<div class="t" style="left:321.75px;top:457.65px;font-size:11.3px;font-weight:bold;-webkit-text-stroke:0.3px;color:#000;letter-spacing:0.034px;">Description</div>
<div class="t" style="left:467.50px;top:457.65px;font-size:11.3px;font-weight:bold;-webkit-text-stroke:0.3px;color:#000;letter-spacing:0.063px;">Priority</div>
<div class="t" style="left:554.50px;top:457.65px;font-size:11.3px;font-weight:bold;-webkit-text-stroke:0.3px;color:#000;letter-spacing:0.161px;">Information</div>
<div class="fld cy" style="left:168px;top:472px;width:65px;height:19px"></div>
<div class="dd sm" style="left:236px;top:473px;width:18px;height:18px"></div>
<div class="fld gr" style="left:256px;top:472px;width:205px;height:19px"></div>
<div class="fld cy" style="left:462px;top:472px;width:48px;height:19px"></div>
<div class="fld cy" style="left:512px;top:472px;width:150px;height:19px"></div>
<div class="btn" style="left:665px;top:472px;width:74px;height:19px;border-radius:2px;"></div>
<div class="t" style="left:683.60px;top:474.95px;font-size:11.7px;font-weight:bold;-webkit-text-stroke:0.3px;color:#000;letter-spacing:-0.103px;">Delete</div>
<div class="fld cy" style="left:168px;top:493px;width:65px;height:19px"></div>
<div class="dd sm off" style="left:236px;top:494px;width:18px;height:18px"></div>
<div class="fld gr" style="left:256px;top:493px;width:205px;height:19px"></div>
<div class="fld cy" style="left:462px;top:493px;width:48px;height:19px"></div>
<div class="fld cy" style="left:512px;top:493px;width:150px;height:19px"></div>
<div class="btn" style="left:665px;top:494px;width:74px;height:18px;border-radius:2px;border-color:#fbfbfb #a4a898 #a4a898 #fbfbfb;box-shadow:none"></div>
<div class="t" style="left:683.60px;top:495.95px;font-size:11.7px;font-weight:bold;-webkit-text-stroke:0.3px;color:#6c7064;letter-spacing:-0.103px;">Delete</div>
<div class="fld cy" style="left:168px;top:514px;width:65px;height:20px"></div>
<div class="dd sm off" style="left:236px;top:515px;width:18px;height:19px"></div>
<div class="fld gr" style="left:256px;top:514px;width:205px;height:20px"></div>
<div class="fld cy" style="left:462px;top:514px;width:48px;height:20px"></div>
<div class="fld cy" style="left:512px;top:514px;width:150px;height:20px"></div>
<div class="btn" style="left:665px;top:515px;width:74px;height:19px;border-radius:2px;border-color:#fbfbfb #a4a898 #a4a898 #fbfbfb;box-shadow:none"></div>
<div class="t" style="left:683.60px;top:517.95px;font-size:11.7px;font-weight:bold;-webkit-text-stroke:0.3px;color:#6c7064;letter-spacing:-0.103px;">Delete</div>
<div class="t" style="left:169.50px;top:475.80px;font-size:11px;font-weight:bold;-webkit-text-stroke:0.3px;color:#000;letter-spacing:0.000px;transform:scaleX(0.9042);transform-origin:0 0;">HPH</div>
<div class="t" style="left:258.75px;top:475.80px;font-size:11px;font-weight:bold;-webkit-text-stroke:0.3px;color:#40443a;letter-spacing:0.000px;transform:scaleX(0.9079);transform-origin:0 0;">HOME PHONE</div>
<div class="t" style="left:463.50px;top:475.80px;font-size:11px;font-weight:bold;-webkit-text-stroke:0.3px;color:#000;letter-spacing:0.000px;">1</div>
<div class="t" style="left:514.50px;top:475.80px;font-size:11px;font-weight:bold;-webkit-text-stroke:0.3px;color:#000;letter-spacing:-0.113px;">333-789-5621</div>
<div class="scr" style="left:152px;top:472px;height:61px"></div>
<div class="a" style="left:153px;top:486px;width:13px;height:32px;background:#c9c9c9;border-top:1px solid #8c9084;border-bottom:1px solid #8c9084;box-shadow:inset 1px 1px 0 #f4f4f4"></div>
<div class="a" style="left:155.5px;top:477px;border:4px solid transparent;border-bottom:4.5px solid #707464;border-top:0"></div>
<div class="a" style="left:155.5px;top:523.5px;border:4px solid transparent;border-top:4.5px solid #707464;border-bottom:0"></div>
<div class="a" style="left:156px;top:499px;width:2px;height:2px;background:#fff;box-shadow:1px 1px 0 #9a9e90"></div>
<div class="a" style="left:161px;top:496px;width:2px;height:2px;background:#fff;box-shadow:1px 1px 0 #9a9e90"></div>
<div class="a" style="left:161px;top:504px;width:2px;height:2px;background:#fff;box-shadow:1px 1px 0 #9a9e90"></div>
<div class="btn" style="left:308px;top:573px;width:102px;height:25px"></div>
<div class="t" style="left:343.75px;top:579.15px;font-size:13.3px;font-weight:bold;-webkit-text-stroke:0.3px;color:#000;letter-spacing:-0.137px;">Save</div>
<div class="btn" style="left:485px;top:573px;width:102px;height:25px"></div>
<div class="t" style="left:520.60px;top:579.15px;font-size:13.3px;font-weight:bold;-webkit-text-stroke:0.3px;color:#000;letter-spacing:0.000px;transform:scaleX(0.9561);transform-origin:0 0;">Back</div>
<div class="t" style="left:33.80px;top:606.80px;font-size:8px;font-weight:bold;-webkit-text-stroke:0.3px;color:#000;letter-spacing:0.000px;transform:scaleX(0.9505);transform-origin:0 0;">PROD V.1</div>
<div class="a" style="left:15px;top:636px;width:894px;height:37px;border:1px solid #a0a094;border-radius:8px"></div>
<div class="a" style="left:22px;top:654px;width:880px;height:1px;background:#4c4c48"></div>
<div class="a" style="left:148px;top:656px;width:1px;height:14px;background:#a0a094"></div>
<div class="a" style="left:176px;top:656px;width:1px;height:14px;background:#a0a094"></div>
<div class="a" style="left:256px;top:656px;width:1px;height:14px;background:#a0a094"></div>
<div class="a" style="left:345px;top:656px;width:1px;height:14px;background:#a0a094"></div>
<div class="a" style="left:400px;top:656px;width:1px;height:14px;background:#a0a094"></div>
<div class="a" style="left:894px;top:637px;width:1px;height:17px;background:#a0a094"></div><div class="a" style="left:895px;top:637px;width:1px;height:17px;background:#4c4c48"></div>
<div class="t" style="left:22.40px;top:640.30px;font-size:12px;color:#f4f4f4;letter-spacing:0.129px;-webkit-text-stroke:0.2px #f4f4f4;">FRM-40400: Transaction complete: 2 records applied and saved.</div>
<div class="t" style="left:22.40px;top:658.30px;font-size:12px;color:#f4f4f4;letter-spacing:-0.173px;-webkit-text-stroke:0.2px #f4f4f4;">Record: 1/1</div>
<div class="t" style="left:239.00px;top:658.30px;font-size:12px;color:#f4f4f4;letter-spacing:0.000px;-webkit-text-stroke:0.2px #f4f4f4;transform:scaleX(0.6998);transform-origin:0 0;">...</div>
<div class="t" style="left:408.50px;top:658.30px;font-size:12px;color:#f4f4f4;letter-spacing:-0.255px;-webkit-text-stroke:0.2px #f4f4f4;">&lt;OSC&gt;</div>
<div class="a" style="left:0;top:709px;width:1024px;height:25px;background:#eceadc;border-top:1px solid #dcd8c8;box-shadow:inset 0 1px 0 #fbfaf6"></div>
<div class="a" style="left:0;top:734px;width:1024px;height:4px;background:#2a6ae0"></div>
<div class="t" style="left:22.00px;top:719.30px;font-size:11px;font-family:'DejaVu Sans Condensed','Liberation Sans',sans-serif;color:#000;letter-spacing:-0.179px;">Opening http://ahsmdevtest.aphis.usda.gov/forms90/l90servlet;jsessionid=c784052bce7d73cae1fa00549bcad98eb6da4449db8.pkfMn6XMmla</div>
<div class="t" style="left:894.50px;top:719.30px;font-size:11px;font-family:'DejaVu Sans Condensed','Liberation Sans',sans-serif;color:#000;letter-spacing:-0.121px;">Trusted sites</div>
<svg class="a" style="left:0;top:710px" width="1024" height="28" viewBox="0 710 1024 28">
<path d="M6.5 715.5h8l3 3v11.500h-11z" fill="#dfe2fa" stroke="#7c84c4" stroke-width="1"/><path d="M14.5 715.5v3h3" fill="#fff" stroke="#7c84c4" stroke-width="0.700"/><path d="M12.42 725.39A4.4 4.4 0 1 1 13.00 723.6 H4.60" fill="none" stroke="#1e74e0" stroke-width="2.300"/><path d="M2.6 727.5C2 723 7 718 14.5 717" fill="none" stroke="#4cb4f4" stroke-width="1.200"/>
<path d="M748.500 713v19M772.500 713v19M796.500 713v19M820.500 713v19M844.500 713v19M868.500 713v19" stroke="#c8c4b0"/>
<path d="M749.500 713v19M773.500 713v19M797.500 713v19M821.500 713v19M845.500 713v19M869.500 713v19" stroke="#fff"/>
<circle cx="881.500" cy="723.500" r="6.300" fill="#108c10" stroke="#0c3c0c" stroke-width="1.200"/>
<path d="M878 723.500l2.500 3l4.500-6.500" fill="none" stroke="#fff" stroke-width="2"/>
</svg>
</div></body></html>
